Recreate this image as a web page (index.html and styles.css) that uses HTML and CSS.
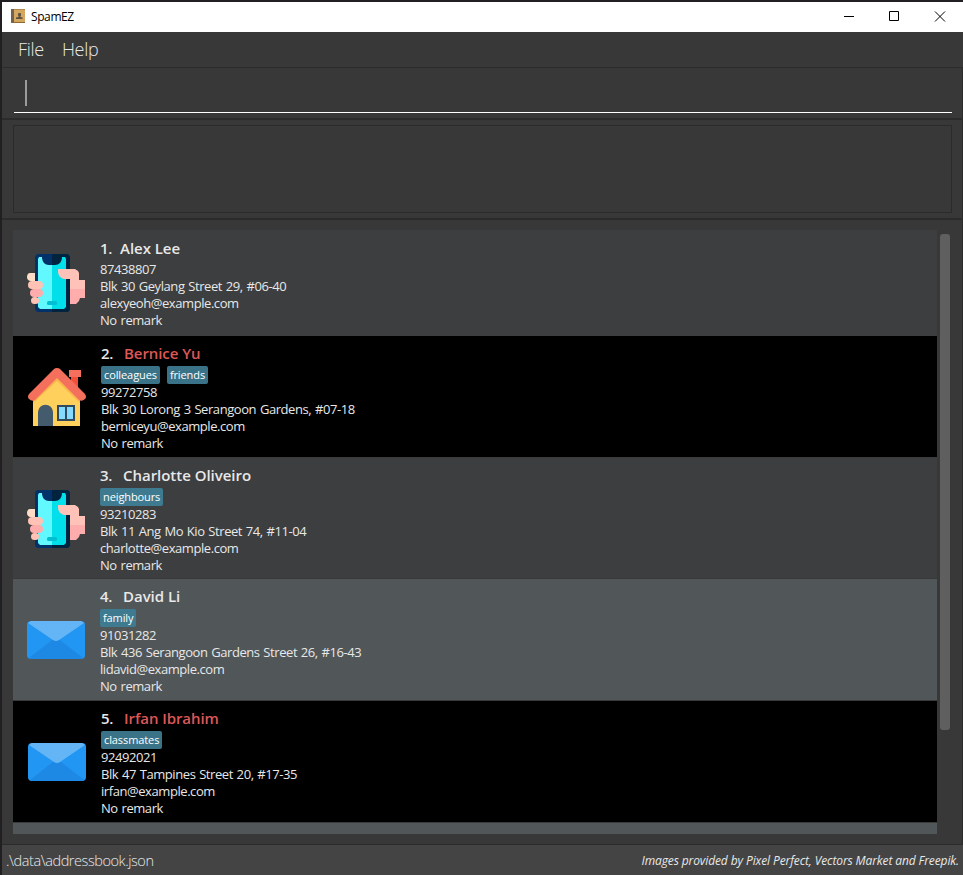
FILE: index.html
```html
<!DOCTYPE html>
<html lang="en">
<head>
<meta charset="utf-8">
<title>SpamEZ</title>
<link rel="stylesheet" href="styles.css">
</head>
<body>
<svg class="defs" width="0" height="0">
  <symbol id="phone" viewBox="0 0 58 58">
    <rect x="8" y="0" width="35" height="58" rx="4" fill="#003168"/>
    <path d="M25 0h14a4 4 0 0 1 4 4v50a4 4 0 0 1-4 4H25z" fill="#00233f"/>
    <path d="M11 5l1-2h3c0 5 3 8 7 8h3v44H13l-2-2z" fill="#62f8ff"/>
    <path d="M25 11h3c4 0 7-3 7-8h3l1 2v48l-2 2H25z" fill="#00dfea"/>
    <rect x="20" y="47" width="10" height="4" rx="1.5" fill="#00bfd0"/>
    <path d="M8 19H3C1 19 0 21 0 23s1 4 4 4h4z" fill="#ffdcc6"/>
    <rect x="1" y="27" width="15" height="8" rx="4" fill="#ffc2b5"/>
    <rect x="3" y="35" width="13" height="8" rx="4" fill="#ffacac"/>
    <rect x="4" y="43" width="8" height="7" rx="3.5" fill="#ffc2b5"/>
    <path d="M31 15h17l3 2 1 2v7h6v9H43V25h-6c-4-1-6-4-6-8z" fill="#ffc2b9"/>
    <path d="M43 35h15v9h-5l-1 3-3 3h-6z" fill="#ffacac"/>
  </symbol>
  <symbol id="house" viewBox="0 0 58 58">
    <rect x="43" y="6" width="7" height="16" fill="#f04f3a"/>
    <rect x="41" y="2" width="12" height="7" fill="#f4705c"/>
    <path d="M5 28L29 8l23 20v30H5z" fill="#ffd05b"/>
    <path d="M5 35v-6L29 7l23 22v6L29 13z" fill="#f8b64c"/>
    <path d="M29 0q2 0 3 1l25 25q2 3 0 5-3 3-6 1L29 10 7 32q-3 2-6-1-2-2 0-5L26 1q1-1 3-1z" fill="#f4705c"/>
    <path d="M10 58V45c0-11 15-11 15 0v13z" fill="#435b6d"/>
    <rect x="29" y="37" width="18" height="16" fill="#324a5e"/>
    <path d="M31 39h6v12h-6zM39 39h6v12h-6z" fill="#84dbff"/>
  </symbol>
  <symbol id="mail" viewBox="0 0 58 58">
    <rect x="0" y="10" width="58" height="38" rx="4" fill="#2196f3"/>
    <path d="M2 47L25 29h8l23 18-2 1H4z" fill="#1e88e5"/>
    <path d="M4 10h50l3 2-25 17q-3 2-6 0L1 12z" fill="#64b5f6"/>
  </symbol>
</svg>
<div class="window">
  <header class="titlebar">
    <svg class="app-icon" width="15" height="15" viewBox="0 0 15 15">
      <rect x="0" y="0" width="14" height="14" fill="#d3a75f"/>
      <rect x="0" y="0" width="3" height="14" fill="#75604f"/>
      <rect x="3" y="0" width="11" height="1" fill="#b08850"/>
      <rect x="0" y="13" width="14" height="1" fill="#8e6736"/>
      <rect x="7" y="4" width="3" height="3" rx="1" fill="#5f5040"/>
      <path d="M7.500 6h2v2l2 .5V10H5V8.500L7.500 8z" fill="#5f5040"/>
    </svg>
    <span class="title">SpamEZ</span>
    <svg class="controls" width="103" height="12" viewBox="0 0 103 12" fill="none" stroke="#000">
      <path d="M0 5.500h10M45.500.500h9v9h-9z"/>
      <path d="M91 .500l10 10M101 .500l-10 10"/>
    </svg>
  </header>
  <nav class="menubar"><span>File</span><span>Help</span></nav>
  <section class="command"><div class="field"><i class="caret"></i></div></section>
  <section class="result"><div class="result-box"></div></section>
  <main class="persons">
    <div class="list">
      <article class="card first">
        <svg class="picture"><use href="#phone"/></svg>
        <div class="info">
          <h2><span class="idx">1.</span><span>Alex Lee</span></h2>
          <p>87438807</p><p>Blk 30 Geylang Street 29, #06-40</p><p>alexyeoh@example.com</p><p>No remark</p>
        </div>
      </article>
      <article class="card black">
        <svg class="picture"><use href="#house"/></svg>
        <div class="info">
          <h2><span class="idx">2.</span><span class="red">Bernice Yu</span></h2>
          <div class="tags"><span>colleagues</span><span>friends</span></div>
          <p>99272758</p><p>Blk 30 Lorong 3 Serangoon Gardens, #07-18</p><p>berniceyu@example.com</p><p>No remark</p>
        </div>
      </article>
      <article class="card short">
        <svg class="picture"><use href="#phone"/></svg>
        <div class="info">
          <h2><span class="idx">3.</span><span>Charlotte Oliveiro</span></h2>
          <div class="tags"><span>neighbours</span></div>
          <p>93210283</p><p>Blk 11 Ang Mo Kio Street 74, #11-04</p><p>charlotte@example.com</p><p>No remark</p>
        </div>
      </article>
      <article class="card slate">
        <svg class="picture"><use href="#mail"/></svg>
        <div class="info">
          <h2><span class="idx">4.</span><span>David Li</span></h2>
          <div class="tags"><span>family</span></div>
          <p>91031282</p><p>Blk 436 Serangoon Gardens Street 26, #16-43</p><p>lidavid@example.com</p><p>No remark</p>
        </div>
      </article>
      <article class="card black">
        <svg class="picture"><use href="#mail"/></svg>
        <div class="info">
          <h2><span class="idx">5.</span><span class="red">Irfan Ibrahim</span></h2>
          <div class="tags"><span>classmates</span></div>
          <p>92492021</p><p>Blk 47 Tampines Street 20, #17-35</p><p>irfan@example.com</p><p>No remark</p>
        </div>
      </article>
      <div class="card slate partial"></div>
    </div>
    <div class="scrollbar"><div class="thumb"></div></div>
  </main>
  <footer class="status"><span class="path">.\data\addressbook.json</span><span class="credit">Images provided by Pixel Perfect, Vectors Market and Freepik.</span></footer>
</div>
</body>
</html>
```
FILE: styles.css
```css
* { box-sizing: border-box; }
body {
  margin: 0;
  width: 963px;
  height: 875px;
  padding: 2px 0 0 2px;
  overflow: hidden;
  background: #211f21;
  font-family: "Open Sans", "Noto Sans", sans-serif;
  color: #e8e8e8;
}
.defs { display: block; width: 0; height: 0; }
.window { width: 961px; height: 873px; display: flex; flex-direction: column; background: #383838; }
.titlebar { height: 30px; flex: none; display: flex; align-items: center; background: #fff; color: #000; padding: 0 16px 1px 9px; }
.title { font-size: 12px; letter-spacing: -0.4px; margin-left: 5px; }
.controls { margin-left: auto; margin-top: 1px; }
.menubar { height: 36px; flex: none; display: flex; gap: 18px; align-items: center; padding: 0 0 2px 16px; border-bottom: 1px solid #2b2b2b; font-size: 18px; font-weight: 300; letter-spacing: -0.28px; }
.command { height: 52px; flex: none; padding: 4px 10px 0 12px; border-bottom: 2px solid #2b2b2b; border-right: 1px solid #2b2b2b; }
.field { height: 41px; border-bottom: 1px solid #fff; padding: 8px 0 0 11px; }
.caret { display: block; width: 2px; height: 26px; background: #9b9b9b; }
.result { height: 100px; flex: none; padding: 5px 10px 0 11px; border-bottom: 2px solid #2b2b2b; border-right: 1px solid #2b2b2b; }
.result-box { height: 88px; border: 1px solid #2b2b2b; }
.persons { height: 625px; flex: none; display: flex; padding: 10px 11px; border-bottom: 1px solid #2b2b2b; border-right: 1px solid #2b2b2b; }
.list { width: 924px; height: 604px; overflow: hidden; }
.card { display: flex; align-items: center; height: 122px; padding: 0 0 0 14px; background: #3c3e3f; border-bottom: 1px solid #3a3a3a; }
.card.black { background: #000; padding-left: 15px; }
.card.slate { background: #515658; }
.card.first { height: 106px; border: 0; }
.first .info { padding-bottom: 2px; }
.card.short { height: 121px; }
.short .picture { margin-top: 2px; }
.card.partial { height: 11px; border: 0; }
.picture { width: 58px; height: 58px; flex: none; margin-right: 15px; }
.info { white-space: nowrap; }
h2 { margin: 0; height: 25px; line-height: 25px; font-size: 15px; font-weight: 600; letter-spacing: -0.03px; display: flex; }
.idx { width: 23px; letter-spacing: -0.4px; }
.first .idx { width: 20px; }
.red { color: #dd5757; letter-spacing: -0.07px; }
p { margin: 0; height: 17px; line-height: 17px; font-size: 13px; letter-spacing: -0.43px; word-spacing: 0.8px; }
.tags { display: flex; gap: 7px; height: 18px; }
.tags span { height: 18px; line-height: 18px; padding: 0 3px; border-radius: 2px; background: #3e7b91; color: #fff; font-size: 11px; letter-spacing: -0.1px; }
.black .tags span { background: #3a7388; }
.scrollbar { width: 10px; margin-left: 3px; padding-top: 4px; }
.thumb { height: 496px; border-radius: 3px; background: #5f5f5f; }
.status { height: 30px; flex: none; display: flex; justify-content: space-between; align-items: center; padding: 0 4px; background: #444; }
.path { font-size: 14.5px; font-weight: 300; letter-spacing: -0.43px; }
.credit { font-size: 12px; font-style: italic; font-weight: 500; letter-spacing: -0.11px; padding-top: 1px; }
```
